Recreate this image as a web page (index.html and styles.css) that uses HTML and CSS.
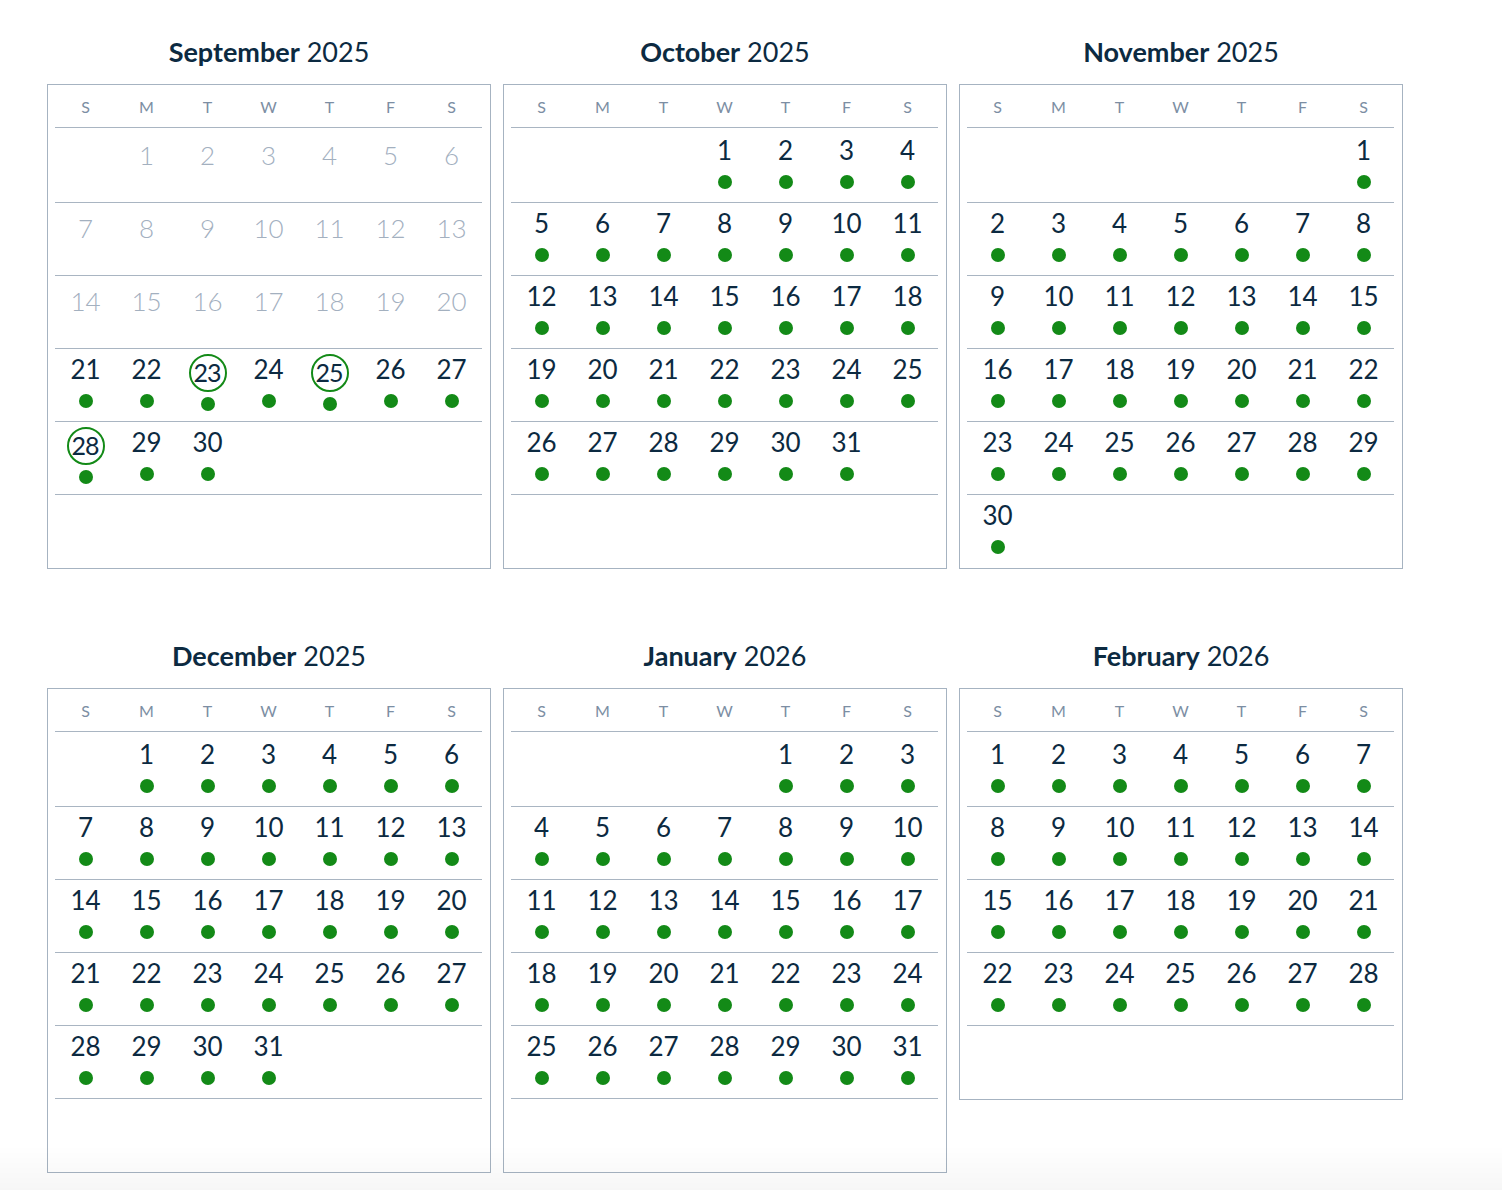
FILE: index.html
```html
<!DOCTYPE html>
<html lang="en">
<head>
<meta charset="utf-8">
<title>Calendar</title>
<link rel="stylesheet" href="styles.css">
</head>
<body>
<div class="months">

  <section class="month">
    <h2 class="title"><b>September</b> 2025</h2>
    <div class="cal">
      <div class="dow"><span>S</span><span>M</span><span>T</span><span>W</span><span>T</span><span>F</span><span>S</span></div>
      <div class="weeks">
        <div class="week">
          <div class="day"></div>
          <div class="day past"><span class="num">1</span></div>
          <div class="day past"><span class="num">2</span></div>
          <div class="day past"><span class="num">3</span></div>
          <div class="day past"><span class="num">4</span></div>
          <div class="day past"><span class="num">5</span></div>
          <div class="day past"><span class="num">6</span></div>
        </div>
        <div class="week">
          <div class="day past"><span class="num">7</span></div>
          <div class="day past"><span class="num">8</span></div>
          <div class="day past"><span class="num">9</span></div>
          <div class="day past"><span class="num">10</span></div>
          <div class="day past"><span class="num">11</span></div>
          <div class="day past"><span class="num">12</span></div>
          <div class="day past"><span class="num">13</span></div>
        </div>
        <div class="week">
          <div class="day past"><span class="num">14</span></div>
          <div class="day past"><span class="num">15</span></div>
          <div class="day past"><span class="num">16</span></div>
          <div class="day past"><span class="num">17</span></div>
          <div class="day past"><span class="num">18</span></div>
          <div class="day past"><span class="num">19</span></div>
          <div class="day past"><span class="num">20</span></div>
        </div>
        <div class="week">
          <div class="day"><span class="num">21</span><i class="dot"></i></div>
          <div class="day"><span class="num">22</span><i class="dot"></i></div>
          <div class="day sel"><span class="num">23</span><i class="dot"></i></div>
          <div class="day"><span class="num">24</span><i class="dot"></i></div>
          <div class="day sel"><span class="num">25</span><i class="dot"></i></div>
          <div class="day"><span class="num">26</span><i class="dot"></i></div>
          <div class="day"><span class="num">27</span><i class="dot"></i></div>
        </div>
        <div class="week">
          <div class="day sel"><span class="num">28</span><i class="dot"></i></div>
          <div class="day"><span class="num">29</span><i class="dot"></i></div>
          <div class="day"><span class="num">30</span><i class="dot"></i></div>
          <div class="day"></div>
          <div class="day"></div>
          <div class="day"></div>
          <div class="day"></div>
        </div>
        <div class="week"></div>
      </div>
    </div>
  </section>

  <section class="month">
    <h2 class="title"><b>October</b> 2025</h2>
    <div class="cal">
      <div class="dow"><span>S</span><span>M</span><span>T</span><span>W</span><span>T</span><span>F</span><span>S</span></div>
      <div class="weeks">
        <div class="week">
          <div class="day"></div>
          <div class="day"></div>
          <div class="day"></div>
          <div class="day"><span class="num">1</span><i class="dot"></i></div>
          <div class="day"><span class="num">2</span><i class="dot"></i></div>
          <div class="day"><span class="num">3</span><i class="dot"></i></div>
          <div class="day"><span class="num">4</span><i class="dot"></i></div>
        </div>
        <div class="week">
          <div class="day"><span class="num">5</span><i class="dot"></i></div>
          <div class="day"><span class="num">6</span><i class="dot"></i></div>
          <div class="day"><span class="num">7</span><i class="dot"></i></div>
          <div class="day"><span class="num">8</span><i class="dot"></i></div>
          <div class="day"><span class="num">9</span><i class="dot"></i></div>
          <div class="day"><span class="num">10</span><i class="dot"></i></div>
          <div class="day"><span class="num">11</span><i class="dot"></i></div>
        </div>
        <div class="week">
          <div class="day"><span class="num">12</span><i class="dot"></i></div>
          <div class="day"><span class="num">13</span><i class="dot"></i></div>
          <div class="day"><span class="num">14</span><i class="dot"></i></div>
          <div class="day"><span class="num">15</span><i class="dot"></i></div>
          <div class="day"><span class="num">16</span><i class="dot"></i></div>
          <div class="day"><span class="num">17</span><i class="dot"></i></div>
          <div class="day"><span class="num">18</span><i class="dot"></i></div>
        </div>
        <div class="week">
          <div class="day"><span class="num">19</span><i class="dot"></i></div>
          <div class="day"><span class="num">20</span><i class="dot"></i></div>
          <div class="day"><span class="num">21</span><i class="dot"></i></div>
          <div class="day"><span class="num">22</span><i class="dot"></i></div>
          <div class="day"><span class="num">23</span><i class="dot"></i></div>
          <div class="day"><span class="num">24</span><i class="dot"></i></div>
          <div class="day"><span class="num">25</span><i class="dot"></i></div>
        </div>
        <div class="week">
          <div class="day"><span class="num">26</span><i class="dot"></i></div>
          <div class="day"><span class="num">27</span><i class="dot"></i></div>
          <div class="day"><span class="num">28</span><i class="dot"></i></div>
          <div class="day"><span class="num">29</span><i class="dot"></i></div>
          <div class="day"><span class="num">30</span><i class="dot"></i></div>
          <div class="day"><span class="num">31</span><i class="dot"></i></div>
          <div class="day"></div>
        </div>
        <div class="week"></div>
      </div>
    </div>
  </section>

  <section class="month">
    <h2 class="title"><b>November</b> 2025</h2>
    <div class="cal">
      <div class="dow"><span>S</span><span>M</span><span>T</span><span>W</span><span>T</span><span>F</span><span>S</span></div>
      <div class="weeks">
        <div class="week">
          <div class="day"></div>
          <div class="day"></div>
          <div class="day"></div>
          <div class="day"></div>
          <div class="day"></div>
          <div class="day"></div>
          <div class="day"><span class="num">1</span><i class="dot"></i></div>
        </div>
        <div class="week">
          <div class="day"><span class="num">2</span><i class="dot"></i></div>
          <div class="day"><span class="num">3</span><i class="dot"></i></div>
          <div class="day"><span class="num">4</span><i class="dot"></i></div>
          <div class="day"><span class="num">5</span><i class="dot"></i></div>
          <div class="day"><span class="num">6</span><i class="dot"></i></div>
          <div class="day"><span class="num">7</span><i class="dot"></i></div>
          <div class="day"><span class="num">8</span><i class="dot"></i></div>
        </div>
        <div class="week">
          <div class="day"><span class="num">9</span><i class="dot"></i></div>
          <div class="day"><span class="num">10</span><i class="dot"></i></div>
          <div class="day"><span class="num">11</span><i class="dot"></i></div>
          <div class="day"><span class="num">12</span><i class="dot"></i></div>
          <div class="day"><span class="num">13</span><i class="dot"></i></div>
          <div class="day"><span class="num">14</span><i class="dot"></i></div>
          <div class="day"><span class="num">15</span><i class="dot"></i></div>
        </div>
        <div class="week">
          <div class="day"><span class="num">16</span><i class="dot"></i></div>
          <div class="day"><span class="num">17</span><i class="dot"></i></div>
          <div class="day"><span class="num">18</span><i class="dot"></i></div>
          <div class="day"><span class="num">19</span><i class="dot"></i></div>
          <div class="day"><span class="num">20</span><i class="dot"></i></div>
          <div class="day"><span class="num">21</span><i class="dot"></i></div>
          <div class="day"><span class="num">22</span><i class="dot"></i></div>
        </div>
        <div class="week">
          <div class="day"><span class="num">23</span><i class="dot"></i></div>
          <div class="day"><span class="num">24</span><i class="dot"></i></div>
          <div class="day"><span class="num">25</span><i class="dot"></i></div>
          <div class="day"><span class="num">26</span><i class="dot"></i></div>
          <div class="day"><span class="num">27</span><i class="dot"></i></div>
          <div class="day"><span class="num">28</span><i class="dot"></i></div>
          <div class="day"><span class="num">29</span><i class="dot"></i></div>
        </div>
        <div class="week">
          <div class="day"><span class="num">30</span><i class="dot"></i></div>
          <div class="day"></div>
          <div class="day"></div>
          <div class="day"></div>
          <div class="day"></div>
          <div class="day"></div>
          <div class="day"></div>
        </div>
      </div>
    </div>
  </section>

  <section class="month">
    <h2 class="title"><b>December</b> 2025</h2>
    <div class="cal">
      <div class="dow"><span>S</span><span>M</span><span>T</span><span>W</span><span>T</span><span>F</span><span>S</span></div>
      <div class="weeks">
        <div class="week">
          <div class="day"></div>
          <div class="day"><span class="num">1</span><i class="dot"></i></div>
          <div class="day"><span class="num">2</span><i class="dot"></i></div>
          <div class="day"><span class="num">3</span><i class="dot"></i></div>
          <div class="day"><span class="num">4</span><i class="dot"></i></div>
          <div class="day"><span class="num">5</span><i class="dot"></i></div>
          <div class="day"><span class="num">6</span><i class="dot"></i></div>
        </div>
        <div class="week">
          <div class="day"><span class="num">7</span><i class="dot"></i></div>
          <div class="day"><span class="num">8</span><i class="dot"></i></div>
          <div class="day"><span class="num">9</span><i class="dot"></i></div>
          <div class="day"><span class="num">10</span><i class="dot"></i></div>
          <div class="day"><span class="num">11</span><i class="dot"></i></div>
          <div class="day"><span class="num">12</span><i class="dot"></i></div>
          <div class="day"><span class="num">13</span><i class="dot"></i></div>
        </div>
        <div class="week">
          <div class="day"><span class="num">14</span><i class="dot"></i></div>
          <div class="day"><span class="num">15</span><i class="dot"></i></div>
          <div class="day"><span class="num">16</span><i class="dot"></i></div>
          <div class="day"><span class="num">17</span><i class="dot"></i></div>
          <div class="day"><span class="num">18</span><i class="dot"></i></div>
          <div class="day"><span class="num">19</span><i class="dot"></i></div>
          <div class="day"><span class="num">20</span><i class="dot"></i></div>
        </div>
        <div class="week">
          <div class="day"><span class="num">21</span><i class="dot"></i></div>
          <div class="day"><span class="num">22</span><i class="dot"></i></div>
          <div class="day"><span class="num">23</span><i class="dot"></i></div>
          <div class="day"><span class="num">24</span><i class="dot"></i></div>
          <div class="day"><span class="num">25</span><i class="dot"></i></div>
          <div class="day"><span class="num">26</span><i class="dot"></i></div>
          <div class="day"><span class="num">27</span><i class="dot"></i></div>
        </div>
        <div class="week">
          <div class="day"><span class="num">28</span><i class="dot"></i></div>
          <div class="day"><span class="num">29</span><i class="dot"></i></div>
          <div class="day"><span class="num">30</span><i class="dot"></i></div>
          <div class="day"><span class="num">31</span><i class="dot"></i></div>
          <div class="day"></div>
          <div class="day"></div>
          <div class="day"></div>
        </div>
        <div class="week"></div>
      </div>
    </div>
  </section>

  <section class="month">
    <h2 class="title"><b>January</b> 2026</h2>
    <div class="cal">
      <div class="dow"><span>S</span><span>M</span><span>T</span><span>W</span><span>T</span><span>F</span><span>S</span></div>
      <div class="weeks">
        <div class="week">
          <div class="day"></div>
          <div class="day"></div>
          <div class="day"></div>
          <div class="day"></div>
          <div class="day"><span class="num">1</span><i class="dot"></i></div>
          <div class="day"><span class="num">2</span><i class="dot"></i></div>
          <div class="day"><span class="num">3</span><i class="dot"></i></div>
        </div>
        <div class="week">
          <div class="day"><span class="num">4</span><i class="dot"></i></div>
          <div class="day"><span class="num">5</span><i class="dot"></i></div>
          <div class="day"><span class="num">6</span><i class="dot"></i></div>
          <div class="day"><span class="num">7</span><i class="dot"></i></div>
          <div class="day"><span class="num">8</span><i class="dot"></i></div>
          <div class="day"><span class="num">9</span><i class="dot"></i></div>
          <div class="day"><span class="num">10</span><i class="dot"></i></div>
        </div>
        <div class="week">
          <div class="day"><span class="num">11</span><i class="dot"></i></div>
          <div class="day"><span class="num">12</span><i class="dot"></i></div>
          <div class="day"><span class="num">13</span><i class="dot"></i></div>
          <div class="day"><span class="num">14</span><i class="dot"></i></div>
          <div class="day"><span class="num">15</span><i class="dot"></i></div>
          <div class="day"><span class="num">16</span><i class="dot"></i></div>
          <div class="day"><span class="num">17</span><i class="dot"></i></div>
        </div>
        <div class="week">
          <div class="day"><span class="num">18</span><i class="dot"></i></div>
          <div class="day"><span class="num">19</span><i class="dot"></i></div>
          <div class="day"><span class="num">20</span><i class="dot"></i></div>
          <div class="day"><span class="num">21</span><i class="dot"></i></div>
          <div class="day"><span class="num">22</span><i class="dot"></i></div>
          <div class="day"><span class="num">23</span><i class="dot"></i></div>
          <div class="day"><span class="num">24</span><i class="dot"></i></div>
        </div>
        <div class="week">
          <div class="day"><span class="num">25</span><i class="dot"></i></div>
          <div class="day"><span class="num">26</span><i class="dot"></i></div>
          <div class="day"><span class="num">27</span><i class="dot"></i></div>
          <div class="day"><span class="num">28</span><i class="dot"></i></div>
          <div class="day"><span class="num">29</span><i class="dot"></i></div>
          <div class="day"><span class="num">30</span><i class="dot"></i></div>
          <div class="day"><span class="num">31</span><i class="dot"></i></div>
        </div>
        <div class="week"></div>
      </div>
    </div>
  </section>

  <section class="month">
    <h2 class="title"><b>February</b> 2026</h2>
    <div class="cal">
      <div class="dow"><span>S</span><span>M</span><span>T</span><span>W</span><span>T</span><span>F</span><span>S</span></div>
      <div class="weeks">
        <div class="week">
          <div class="day"><span class="num">1</span><i class="dot"></i></div>
          <div class="day"><span class="num">2</span><i class="dot"></i></div>
          <div class="day"><span class="num">3</span><i class="dot"></i></div>
          <div class="day"><span class="num">4</span><i class="dot"></i></div>
          <div class="day"><span class="num">5</span><i class="dot"></i></div>
          <div class="day"><span class="num">6</span><i class="dot"></i></div>
          <div class="day"><span class="num">7</span><i class="dot"></i></div>
        </div>
        <div class="week">
          <div class="day"><span class="num">8</span><i class="dot"></i></div>
          <div class="day"><span class="num">9</span><i class="dot"></i></div>
          <div class="day"><span class="num">10</span><i class="dot"></i></div>
          <div class="day"><span class="num">11</span><i class="dot"></i></div>
          <div class="day"><span class="num">12</span><i class="dot"></i></div>
          <div class="day"><span class="num">13</span><i class="dot"></i></div>
          <div class="day"><span class="num">14</span><i class="dot"></i></div>
        </div>
        <div class="week">
          <div class="day"><span class="num">15</span><i class="dot"></i></div>
          <div class="day"><span class="num">16</span><i class="dot"></i></div>
          <div class="day"><span class="num">17</span><i class="dot"></i></div>
          <div class="day"><span class="num">18</span><i class="dot"></i></div>
          <div class="day"><span class="num">19</span><i class="dot"></i></div>
          <div class="day"><span class="num">20</span><i class="dot"></i></div>
          <div class="day"><span class="num">21</span><i class="dot"></i></div>
        </div>
        <div class="week">
          <div class="day"><span class="num">22</span><i class="dot"></i></div>
          <div class="day"><span class="num">23</span><i class="dot"></i></div>
          <div class="day"><span class="num">24</span><i class="dot"></i></div>
          <div class="day"><span class="num">25</span><i class="dot"></i></div>
          <div class="day"><span class="num">26</span><i class="dot"></i></div>
          <div class="day"><span class="num">27</span><i class="dot"></i></div>
          <div class="day"><span class="num">28</span><i class="dot"></i></div>
        </div>
        <div class="week"></div>
      </div>
    </div>
  </section>

</div>
</body>
</html>
```

FILE: styles.css
```css
* {
  box-sizing: border-box;
}

html, body {
  margin: 0;
  background: #ffffff;
}

body {
  font-family: Lato, "Noto Sans", "Liberation Sans", sans-serif;
  color: #0c2a41;
  min-height: 1190px;
}

body::after {
  content: "";
  position: fixed;
  left: 0;
  right: 0;
  bottom: 0;
  height: 44px;
  background: linear-gradient(to bottom, rgba(0, 0, 0, 0), rgba(0, 0, 0, 0.035));
  pointer-events: none;
}

.months {
  display: grid;
  grid-template-columns: repeat(3, 444px);
  column-gap: 12px;
  row-gap: 71px;
  padding: 36px 0 0 47px;
  align-items: start;
}

.title {
  margin: 0 0 16px;
  height: 32px;
  font-size: 27px;
  line-height: 32px;
  font-weight: 400;
  text-align: center;
  color: #0c2a41;
}

.title b {
  font-weight: 700;
}

.cal {
  border: 1px solid #a6b3c1;
  padding: 0 8px 0 7px;
  background: #fff;
}

.dow {
  display: grid;
  grid-template-columns: repeat(7, 1fr);
  align-items: center;
  height: 43px;
  padding-top: 1px;
  border-bottom: 1px solid #a9b5c2;
  font-size: 16px;
  color: #7c8ea3;
  text-align: center;
}

.weeks {
  padding-top: 2px;
}

.week {
  display: grid;
  grid-template-columns: repeat(7, 1fr);
  height: 73px;
  border-bottom: 1px solid #a9b5c2;
}

.week:last-child {
  border-bottom: none;
}

.day {
  display: flex;
  flex-direction: column;
  align-items: center;
  padding-top: 5px;
}

.num {
  display: block;
  height: 30px;
  font-size: 26px;
  line-height: 30px;
  font-weight: 400;
  color: #0c2a41;
}

.dot {
  display: block;
  width: 14px;
  height: 14px;
  margin-top: 10px;
  border-radius: 50%;
  background: #138a17;
}

.day.past {
  padding-top: 10px;
}

.day.past .num {
  font-weight: 300;
  color: #a3b0bf;
}

.day.sel .num {
  width: 38px;
  height: 38px;
  border: 2px solid #138a17;
  border-radius: 50%;
  font-size: 25px;
  line-height: 32px;
  text-align: center;
  letter-spacing: -1px;
  text-indent: -1px;
}

.day.sel .dot {
  margin-top: 5px;
}
```
